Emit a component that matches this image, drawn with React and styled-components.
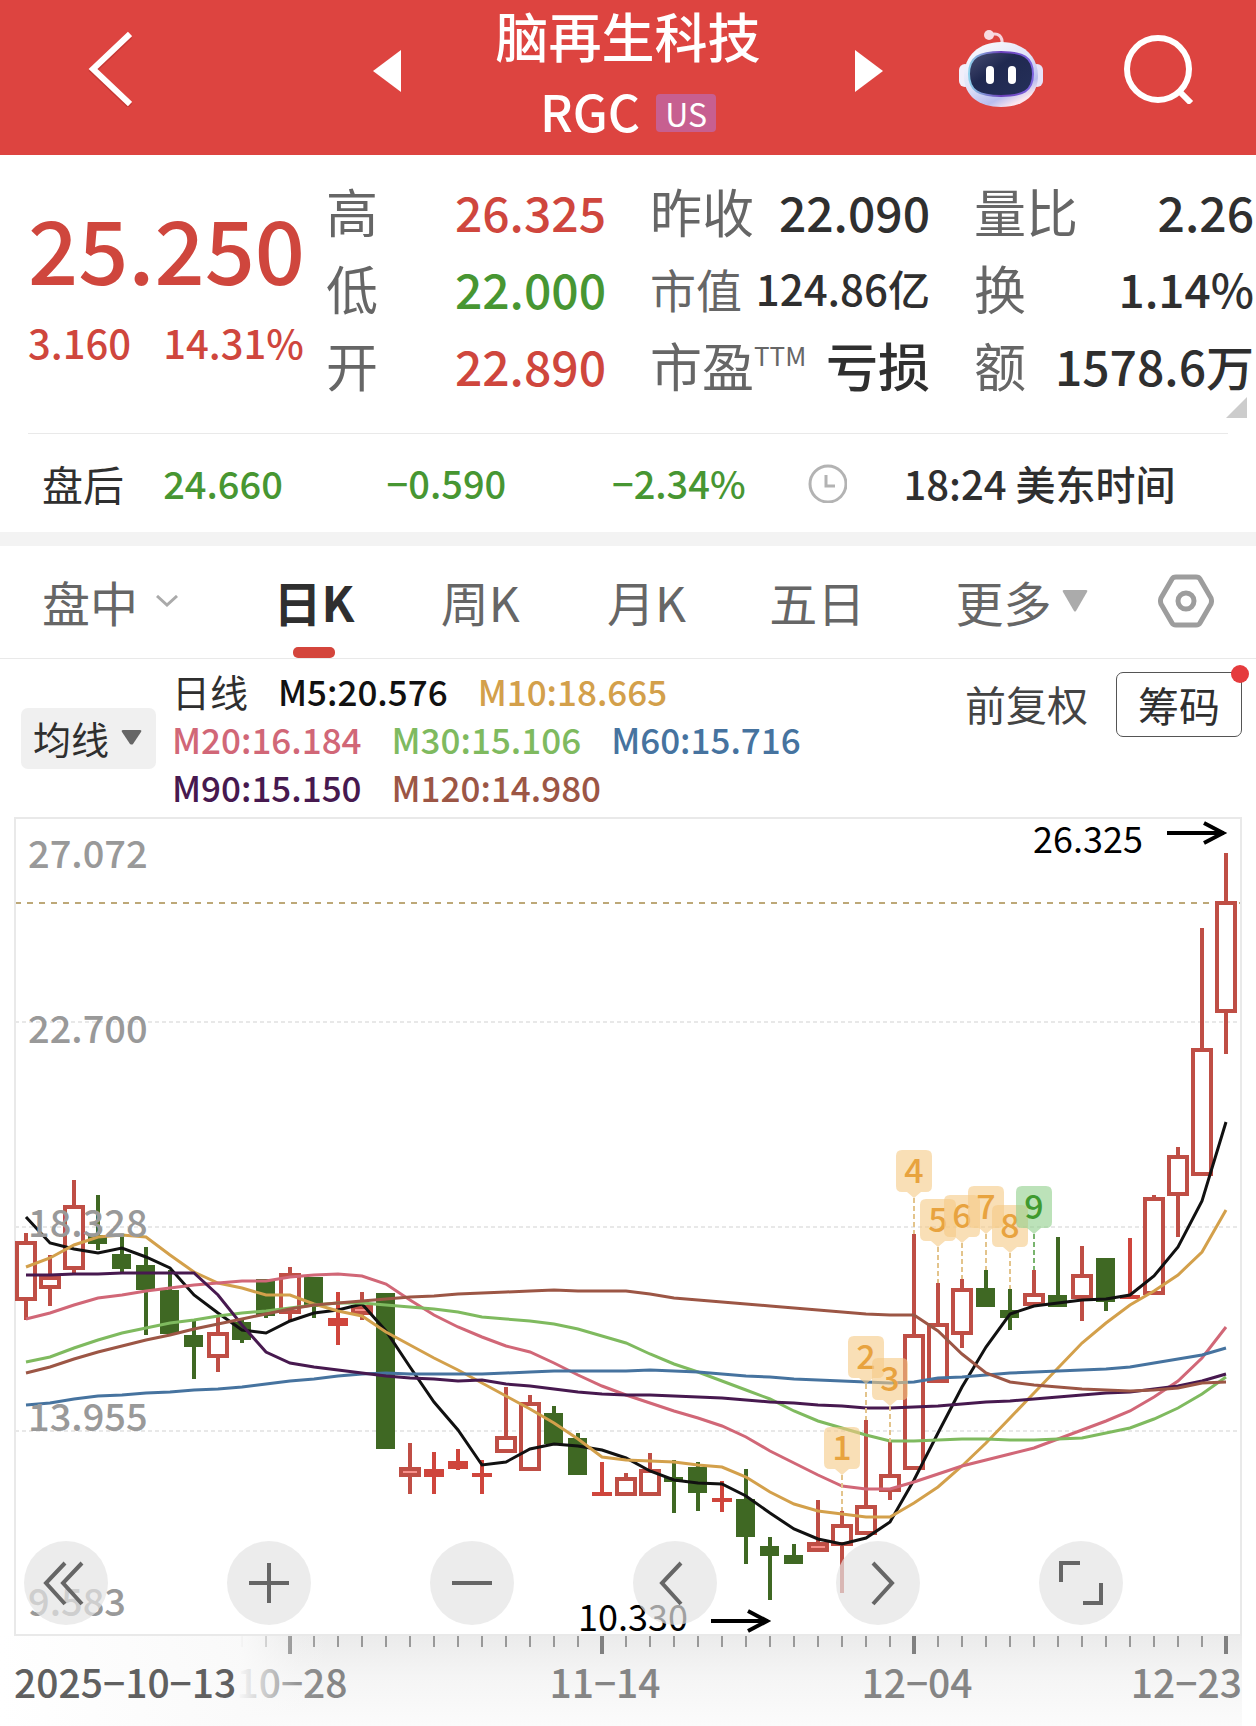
import React from "react";
import styled, { createGlobalStyle } from "styled-components";

const RED = "#cf463d";
const GREEN = "#479632";
const INK = "#2f2f2f";
const GREY = "#666666";
const RULE = "#e9e9e9";

const GlobalStyle = createGlobalStyle`
  *, *::before, *::after { box-sizing: border-box; }
  body {
    margin: 0;
    background: #fff;
    color: ${INK};
    font-family: "Noto Sans CJK SC", "Noto Sans", sans-serif;
  }
  button, select { font: inherit; color: inherit; }
  h1, p, dl, dd, dt { margin: 0; }
`;

const PlainButton = styled.button`
  display: flex;
  align-items: center;
  padding: 0;
  border: 0;
  background: none;
  cursor: pointer;
`;

/* ---------- header ---------- */

const Header = styled.header`
  display: grid;
  grid-template-columns: 1fr 510px 1fr;
  align-items: center;
  height: 155px;
  background: #dd4440;
  color: #fff;
`;

const HeaderStart = styled.div`
  display: flex;
  padding: 0 0 18px 88px;
`;

const HeaderCenter = styled.div`
  display: flex;
  align-items: center;
  justify-content: space-between;
  height: 100%;
`;

const HeaderEnd = styled.div`
  display: flex;
  align-items: center;
  justify-content: flex-end;
  gap: 80px;
  padding: 0 62px 18px 0;
`;

const Stepper = styled(PlainButton)`
  padding-bottom: 14px;
`;

const TitleBlock = styled.div`
  display: flex;
  flex-direction: column;
  align-items: center;
  padding-bottom: 5px;
`;

const StockName = styled.h1`
  font-size: 53px;
  font-weight: 500;
  line-height: 70px;
`;

const TickerLine = styled.p`
  display: flex;
  align-items: center;
  gap: 16px;
  font-size: 50px;
  font-weight: 500;
  line-height: 80px;
`;

const MarketBadge = styled.span`
  width: 60px;
  margin-top: 6px;
  border-radius: 4px;
  background: #c75f90;
  font-size: 32px;
  font-weight: 400;
  line-height: 38px;
  text-align: center;
`;

/* ---------- quote ---------- */

const Quote = styled.section`
  position: relative;
  display: flex;
  height: 278px;
  padding: 18px 2px 0 28px;
`;

const PriceBlock = styled.div`
  flex: 0 0 298px;
  color: ${RED};
`;

const Price = styled.p`
  padding-top: 10px;
  font-size: 88px;
  font-weight: 500;
  line-height: 128px;
`;

const Change = styled.p`
  display: flex;
  gap: 32px;
  padding-top: 2px;
  font-size: 40px;
  font-weight: 500;
  line-height: 58px;
`;

const Stats = styled.dl`
  display: grid;
  flex: 1;
  grid-template-columns: repeat(3, 1fr);
  grid-auto-rows: 77px;
  column-gap: 44px;
`;

const Stat = styled.div`
  display: flex;
  align-items: center;
  justify-content: space-between;
  padding-bottom: 2px;
  white-space: nowrap;
`;

const StatLabel = styled.dt`
  display: flex;
  color: ${GREY};
  font-size: ${(p) => (p.$compact ? 46 : 52)}px;
  line-height: 76px;
`;

const Sup = styled.sup`
  font-size: 26px;
  line-height: 56px;
  vertical-align: top;
`;

const StatValue = styled.dd`
  color: ${(p) => p.$color || INK};
  font-size: ${(p) => p.$size || 48}px;
  font-weight: 500;
  line-height: 76px;
`;

const Corner = styled.span`
  position: absolute;
  right: 9px;
  bottom: 15px;
  border-style: solid;
  border-width: 0 0 21px 21px;
  border-color: transparent transparent #cccccc transparent;
`;

/* ---------- after hours ---------- */

const AfterHours = styled.section`
  display: grid;
  grid-template-columns: 121fr 223fr 225fr 196fr 95fr 310fr;
  align-items: center;
  height: 99px;
  margin: 0 28px;
  padding: 0 14px;
  border-top: 1px solid ${RULE};
  white-space: nowrap;
`;

const Cell = styled.span`
  display: flex;
  align-items: center;
  font-size: ${(p) => p.$size || 38}px;
  font-weight: ${(p) => (p.$light ? 400 : 500)};
  line-height: 60px;
  color: ${(p) => p.$color || INK};
`;

const Band = styled.div`
  height: 14px;
  background: #f3f3f3;
`;

/* ---------- tabs ---------- */

const Tabs = styled.nav`
  display: grid;
  grid-template-columns: 231fr 167fr 166fr 162fr 186fr 202fr 56fr;
  align-items: stretch;
  height: 113px;
  padding: 0 42px;
  border-bottom: 1px solid ${RULE};
`;

const TabCell = styled.div`
  display: flex;
`;

const Tab = styled(PlainButton)`
  position: relative;
  gap: ${(p) => p.$gap || 0}px;
  padding-bottom: 2px;
  color: ${(p) => (p.$active ? INK : GREY)};
  font-size: 48px;
  font-weight: ${(p) => (p.$active ? 700 : 400)};
  line-height: 72px;
  white-space: nowrap;

  &::after {
    content: "";
    display: ${(p) => (p.$active ? "block" : "none")};
    position: absolute;
    left: calc(50% - 21px);
    bottom: 0;
    width: 42px;
    height: 11px;
    border-radius: 5px;
    background: #d4453c;
  }
`;

/* ---------- indicators ---------- */

const Indicators = styled.section`
  display: flex;
  align-items: center;
  height: 158px;
  padding: 0 14px 0 21px;
`;

const SelectBox = styled.label`
  position: relative;
  flex: none;
  width: 135px;
  height: 61px;
`;

const Select = styled.select`
  appearance: none;
  width: 100%;
  height: 100%;
  padding: 0 0 0 12px;
  border: 0;
  border-radius: 7px;
  background: #f0f0f0;
  font-size: 38px;
  line-height: 60px;
`;

const SelectArrow = styled.svg`
  position: absolute;
  right: 14px;
  top: 22px;
  pointer-events: none;
`;

const Averages = styled.div`
  flex: 1;
  padding: 2px 0 0 16px;
`;

const AverageRow = styled.div`
  display: flex;
  gap: 30px;
  font-size: 35px;
  font-weight: 500;
  line-height: 48px;
  white-space: nowrap;
`;

const Average = styled.span`
  color: ${(p) => p.$color};
`;

const PeriodName = styled.span`
  font-size: 38px;
  font-weight: 400;
`;

const Tools = styled.div`
  display: flex;
  align-self: flex-start;
  align-items: center;
  gap: 28px;
  padding-top: 12px;
`;

const TextTool = styled(PlainButton)`
  padding-bottom: 2px;
  color: #444444;
  font-size: 41px;
  line-height: 64px;
`;

const BoxTool = styled(PlainButton)`
  position: relative;
  justify-content: center;
  width: 126px;
  height: 65px;
  border: 1px solid #555555;
  border-radius: 7px;
  font-size: 41px;
  line-height: 60px;

  &::after {
    content: "";
    position: absolute;
    top: -8px;
    right: -8px;
    width: 18px;
    height: 18px;
    border-radius: 50%;
    background: #e53b3d;
  }
`;

/* ---------- chart ---------- */

const ChartArea = styled.section`
  position: relative;
`;

const ChartSvg = styled.svg`
  display: block;
  width: 100%;
  height: auto;
  overflow: visible;
  font-family: "Noto Sans CJK SC", "Noto Sans", sans-serif;
`;

const ChartControls = styled.div`
  position: absolute;
  left: 24px;
  right: 133px;
  bottom: 101px;
  display: flex;
  justify-content: space-between;
`;

const RoundButton = styled(PlainButton)`
  justify-content: center;
  width: 84px;
  height: 84px;
  border-radius: 50%;
  background: rgba(228, 228, 228, 0.7);
`;

const X0 = 26;
const STEP = 24;
const xAt = (i) => X0 + i * STEP;

/* kind: h = hollow rise, f = filled rise, g = fall; then high, top, bottom, low */
const CANDLES = [
  ["h", 1233, 1241, 1301, 1320], ["h", 1255, 1276, 1289, 1306], ["h", 1180, 1205, 1270, 1274],
  ["g", 1195, 1235, 1244, 1250], ["g", 1235, 1254, 1269, 1273], ["g", 1247, 1265, 1290, 1335],
  ["g", 1270, 1290, 1334, 1334], ["g", 1321, 1335, 1347, 1379], ["h", 1317, 1332, 1358, 1372],
  ["g", 1320, 1322, 1340, 1343], ["g", 1279, 1279, 1316, 1318], ["h", 1267, 1273, 1314, 1321],
  ["g", 1277, 1277, 1307, 1318], ["f", 1292, 1318, 1326, 1345], ["h", 1292, 1305, 1315, 1320],
  ["g", 1293, 1293, 1449, 1449], ["h", 1443, 1467, 1477, 1494], ["f", 1452, 1469, 1477, 1494],
  ["f", 1449, 1461, 1469, 1470], ["f", 1460, 1473, 1477, 1494], ["h", 1387, 1436, 1453, 1453],
  ["h", 1395, 1402, 1471, 1471], ["g", 1406, 1413, 1444, 1444], ["g", 1433, 1438, 1475, 1475],
  ["f", 1462, 1492, 1496, 1496], ["h", 1473, 1477, 1496, 1496], ["h", 1453, 1469, 1496, 1496],
  ["g", 1460, 1477, 1482, 1513], ["g", 1462, 1467, 1493, 1511], ["f", 1481, 1498, 1502, 1512],
  ["g", 1469, 1499, 1537, 1564], ["g", 1537, 1546, 1556, 1600], ["g", 1544, 1555, 1564, 1564],
  ["h", 1500, 1542, 1552, 1552], ["h", 1511, 1524, 1546, 1593], ["h", 1420, 1505, 1535, 1535],
  ["h", 1442, 1474, 1492, 1500], ["h", 1234, 1334, 1470, 1470], ["h", 1283, 1323, 1383, 1383],
  ["h", 1279, 1288, 1335, 1348], ["g", 1270, 1288, 1307, 1307], ["g", 1289, 1310, 1318, 1330],
  ["h", 1270, 1293, 1306, 1306], ["g", 1237, 1295, 1307, 1307], ["h", 1246, 1274, 1299, 1321],
  ["g", 1258, 1258, 1302, 1311], ["f", 1238, 1295, 1299, 1299], ["h", 1195, 1197, 1295, 1295],
  ["h", 1147, 1155, 1196, 1237], ["h", 928, 1048, 1176, 1176], ["h", 853, 901, 1013, 1054],
];

const LINES = [
  { color: "#111111", ys: [1217, 1243, 1249, 1253, 1248, 1257, 1268, 1295, 1313, 1330, 1333, 1321, 1313, 1310, 1304, 1331, 1367, 1402, 1430, 1465, 1462, 1449, 1444, 1446, 1450, 1458, 1471, 1480, 1483, 1484, 1496, 1513, 1529, 1539, 1544, 1538, 1522, 1480, 1433, 1387, 1347, 1314, 1306, 1303, 1300, 1299, 1295, 1276, 1247, 1201, 1122] },
  { color: "#d3a04b", ys: [1267, 1258, 1245, 1237, 1235, 1237, 1255, 1272, 1283, 1288, 1295, 1295, 1304, 1311, 1316, 1332, 1345, 1358, 1370, 1383, 1396, 1409, 1423, 1439, 1457, 1460, 1461, 1462, 1465, 1467, 1477, 1492, 1504, 1511, 1514, 1517, 1517, 1503, 1487, 1466, 1443, 1418, 1393, 1368, 1343, 1323, 1305, 1291, 1275, 1252, 1210] },
  { color: "#d16777", ys: [1319, 1313, 1305, 1298, 1295, 1291, 1288, 1285, 1283, 1281, 1281, 1277, 1275, 1274, 1276, 1284, 1300, 1315, 1327, 1337, 1346, 1352, 1363, 1375, 1386, 1395, 1403, 1411, 1418, 1426, 1437, 1451, 1463, 1475, 1486, 1489, 1489, 1482, 1474, 1466, 1460, 1454, 1448, 1439, 1430, 1421, 1411, 1397, 1381, 1358, 1327] },
  { color: "#7fba5f", ys: [1362, 1357, 1348, 1340, 1333, 1328, 1323, 1320, 1316, 1313, 1311, 1308, 1305, 1303, 1303, 1305, 1307, 1309, 1312, 1317, 1319, 1321, 1324, 1329, 1336, 1343, 1354, 1364, 1372, 1381, 1390, 1399, 1411, 1421, 1428, 1435, 1441, 1441, 1440, 1439, 1439, 1440, 1440, 1439, 1438, 1433, 1428, 1419, 1408, 1394, 1377] },
  { color: "#46739f", ys: [1405, 1403, 1399, 1396, 1395, 1393, 1392, 1390, 1389, 1387, 1384, 1381, 1379, 1376, 1374, 1373, 1374, 1374, 1374, 1374, 1373, 1372, 1371, 1371, 1371, 1371, 1370, 1371, 1372, 1374, 1376, 1377, 1379, 1380, 1381, 1382, 1383, 1382, 1378, 1377, 1375, 1373, 1372, 1371, 1370, 1369, 1367, 1363, 1359, 1355, 1348] },
  { color: "#47194f", ys: [1275, 1275, 1274, 1274, 1273, 1273, 1273, 1273, 1295, 1325, 1352, 1363, 1367, 1370, 1373, 1376, 1378, 1379, 1381, 1380, 1384, 1386, 1389, 1392, 1394, 1395, 1395, 1396, 1397, 1398, 1400, 1402, 1403, 1405, 1406, 1408, 1408, 1407, 1406, 1404, 1402, 1401, 1399, 1397, 1395, 1393, 1392, 1389, 1386, 1381, 1374] },
  { color: "#9c5645", ys: [1373, 1367, 1359, 1352, 1346, 1340, 1335, 1329, 1324, 1319, 1314, 1309, 1305, 1303, 1301, 1299, 1297, 1296, 1294, 1293, 1292, 1291, 1290, 1291, 1291, 1291, 1294, 1298, 1300, 1302, 1304, 1306, 1308, 1310, 1312, 1314, 1315, 1315, 1331, 1354, 1373, 1382, 1385, 1387, 1389, 1390, 1391, 1390, 1388, 1383, 1382] },
];

/* label, candle index, top of the tag */
const MARKS = [
  [1, 34, 1427], [2, 35, 1336], [3, 36, 1358], [4, 37, 1150], [5, 38, 1199],
  [6, 39, 1195], [7, 40, 1186], [8, 41, 1205], [9, 42, 1186],
];

const PRICE_LABELS = [
  ["27.072", 868], ["22.700", 1043], ["18.328", 1237], ["13.955", 1431], ["9.583", 1616],
];

const DATE_LABELS = [
  ["10−28", 292, "middle"], ["11−14", 605, "middle"], ["12−04", 917, "middle"], ["12−23", 1242, "end"],
];

function Candle({ data, i }) {
  const [kind, high, top, bottom, low] = data;
  const x = xAt(i);
  const color = kind === "g" ? "#3f6823" : kind === "f" ? "#cf453c" : "#bf4e45";
  return (
    <g>
      {high < top && <line x1={x} x2={x} y1={high} y2={top + 1} stroke={color} strokeWidth="4" />}
      {low > bottom && <line x1={x} x2={x} y1={bottom - 1} y2={low} stroke={color} strokeWidth="4" />}
      {kind === "h" ? (
        <rect x={x - 9} y={top + 2} width="18" height={bottom - top - 4} fill={bottom - top > 10 ? "#ffffff" : "#f7908a"} stroke={color} strokeWidth="4" />
      ) : (
        <rect x={x - 10} y={top} width={kind === "f" ? 20 : 19} height={bottom - top} fill={color} />
      )}
    </g>
  );
}

function Mark({ n, i, top }) {
  const x = xAt(i);
  const last = n === 9;
  const tag = `M${x - 12} ${top}h24q6 0 6 6v30q0 6-6 6h-5l-7 6l-7-6h-5q-6 0-6-6v-30q0-6 6-6z`;
  return (
    <g>
      <line x1={x} x2={x} y1={top + 48} y2={CANDLES[i][1]} stroke={last ? "#79b46e" : "#e3c48c"} strokeWidth="2" strokeDasharray="5 3" />
      <path d={tag} fill={last ? "#8fcf8a" : "#f5ca85"} fillOpacity="0.6" />
      <text x={x} y={top + 33} fill={last ? "#3f9a2f" : "#e8a33f"} fontSize="34" fontWeight="500" textAnchor="middle">{n}</text>
    </g>
  );
}

function Arrow({ x, y }) {
  return (
    <path d={`M${x - 59} ${y}H${x - 2}M${x - 22} ${y - 10}L${x - 3} ${y}L${x - 22} ${y + 10}`} fill="none" stroke="#000" strokeWidth="4" />
  );
}

function Chart() {
  return (
    <ChartSvg viewBox="0 817 1256 909" role="img" aria-label="日K线图">
      <defs>
        <linearGradient id="axis" x1="0" y1="0" x2="0" y2="1">
          <stop offset="0" stopColor="#ebebeb" />
          <stop offset="0.45" stopColor="#f5f5f5" />
          <stop offset="1" stopColor="#fbfbfb" />
        </linearGradient>
        <linearGradient id="fade" gradientUnits="userSpaceOnUse" x1="0" y1="0" x2="330" y2="0">
          <stop offset="0" stopColor="#fff" />
          <stop offset="0.73" stopColor="#fafafa" stopOpacity="0.95" />
          <stop offset="0.9" stopColor="#fafafa" stopOpacity="0.15" />
          <stop offset="1" stopColor="#fafafa" stopOpacity="0" />
        </linearGradient>
      </defs>

      {[1022, 1227, 1431].map((y) => (
        <line key={y} x1="15" x2="1241" y1={y} y2={y} stroke="#dedede" strokeWidth="2" strokeOpacity="0.7" strokeDasharray="4 3" />
      ))}
      <line x1="15" x2="1241" y1="903" y2="903" stroke="#bda878" strokeWidth="2" strokeDasharray="6 6" />
      <rect x="15" y="818" width="1226" height="817" fill="none" stroke={RULE} strokeWidth="2" />

      {CANDLES.map((c, i) => <Candle key={i} data={c} i={i} />)}
      {LINES.map((l) => (
        <polyline key={l.color} points={l.ys.map((y, i) => `${xAt(i)},${y}`).join(" ")} fill="none" stroke={l.color} strokeWidth="3" />
      ))}
      {MARKS.map(([n, i, top]) => <Mark key={n} n={n} i={i} top={top} />)}

      {PRICE_LABELS.map(([t, y]) => (
        <text key={t} x="28" y={y} fill="#999999" fontSize="38" fontWeight="500">{t}</text>
      ))}
      <text x="1143" y="853" textAnchor="end" fontSize="36" fill="#000">26.325</text>
      <Arrow x={1226} y={833} />
      <text x="578" y="1631" fontSize="36" fill="#000">10.330</text>
      <Arrow x={770} y={1621} />

      <rect x="0" y="1636" width="1242" height="90" fill="url(#axis)" />
      {Array.from({ length: 42 }, (_, k) => {
        const x = xAt(k + 9);
        const major = (k + 9 - 11) % 13 === 0;
        return <rect key={k} x={x - (major ? 2 : 1)} y="1636" width={major ? 4 : 2} height={major ? 18 : 11} fill={major ? "#808080" : "#999999"} />;
      })}
      {DATE_LABELS.map(([t, x, anchor]) => (
        <text key={t} x={x} y="1698" textAnchor={anchor} fontSize="39" fontWeight="500" fill="#858585">{t}</text>
      ))}
      <rect x="0" y="1636" width="330" height="90" fill="url(#fade)" />
      <text x="14" y="1698" fontSize="39" fontWeight="500" fill="#606060">2025−10−13</text>
    </ChartSvg>
  );
}

function Robot() {
  return (
    <svg width="86" height="80" viewBox="0 0 86 80" aria-hidden="true">
      <defs>
        <linearGradient id="shell" x1="0" y1="0" x2="0.6" y2="1">
          <stop offset="0" stopColor="#ffffff" />
          <stop offset="0.55" stopColor="#dfe2f8" />
          <stop offset="0.85" stopColor="#b9bdee" />
          <stop offset="1" stopColor="#fbe6ee" />
        </linearGradient>
        <linearGradient id="visor" x1="0" y1="0" x2="1" y2="1">
          <stop offset="0" stopColor="#4a4f74" />
          <stop offset="0.4" stopColor="#202950" />
          <stop offset="1" stopColor="#25305a" />
        </linearGradient>
        <linearGradient id="glow" x1="0" y1="0" x2="1" y2="0">
          <stop offset="0" stopColor="#8fd0ea" />
          <stop offset="0.5" stopColor="#6a3fb8" />
          <stop offset="1" stopColor="#7d63e0" />
        </linearGradient>
      </defs>
      <path d="M32 6C40 3 45 7 44 16" fill="none" stroke="#f6d3dc" strokeWidth="3" />
      <circle cx="31" cy="6" r="5" fill="#f8dbe3" />
      <rect x="1" y="35" width="12" height="23" rx="6" fill="#f1eefa" />
      <rect x="73" y="35" width="12" height="23" rx="6" fill="#e6e2f8" />
      <path d="M43 13C65 13 80 27 80 47C80 67 65 78 43 78C21 78 6 67 6 47C6 27 21 13 43 13Z" fill="url(#shell)" />
      <path d="M43 23C65 23 75 28 75 45C75 62 65 67 43 67C21 67 11 62 11 45C11 28 21 23 43 23Z" fill="url(#visor)" stroke="url(#glow)" strokeWidth="2" />
      <rect x="28" y="37" width="8" height="18" rx="4" fill="#fff" />
      <rect x="50" y="37" width="8" height="18" rx="4" fill="#fff" />
    </svg>
  );
}

const CONTROLS = [
  ["快退", "M21 2L2 22L21 43M38 2L19 22L38 43", 44],
  ["放大", "M0 22H40M20 2V42", 40],
  ["缩小", "M0 22H40", 40],
  ["左移", "M21 2L2 22L21 43", 30],
  ["右移", "M9 2L28 22L9 43", 28],
  ["全屏", "M2 21V2H21M24 42H42V22", 44],
];

const STATS = [
  { label: "高", value: "26.325", color: RED },
  { label: "昨收", value: "22.090" },
  { label: "量比", value: "2.26" },
  { label: "低", value: "22.000", color: GREEN },
  { label: "市值", value: "124.86亿", compact: true, size: 42 },
  { label: "换", value: "1.14%", size: 46 },
  { label: "开", value: "22.890", color: RED },
  { label: "市盈", sup: "TTM", value: "亏损", size: 52 },
  { label: "额", value: "1578.6万" },
];

const AVERAGES = [
  [["M5:20.576", "#111111"], ["M10:18.665", "#d3a04b"]],
  [["M20:16.184", "#d16777"], ["M30:15.106", "#7fba5f"], ["M60:15.716", "#46739f"]],
  [["M90:15.150", "#47194f"], ["M120:14.980", "#9c5645"]],
];

export default function App() {
  return (
    <>
      <GlobalStyle />
      <Header>
        <HeaderStart>
          <PlainButton aria-label="返回">
            <svg width="44" height="76" viewBox="0 0 44 76" fill="none">
              <path d="M42 5L5 40L42 75" stroke="#b5302d" strokeOpacity="0.6" strokeWidth="6" />
              <path d="M42 3L5 38L42 73" stroke="#fff" strokeWidth="6" />
            </svg>
          </PlainButton>
        </HeaderStart>
        <HeaderCenter>
          <Stepper aria-label="上一只">
            <svg width="28" height="42" viewBox="0 0 28 42"><path d="M28 0V42L0 21Z" fill="#fff" /></svg>
          </Stepper>
          <TitleBlock>
            <StockName>脑再生科技</StockName>
            <TickerLine>RGC<MarketBadge>US</MarketBadge></TickerLine>
          </TitleBlock>
          <Stepper aria-label="下一只">
            <svg width="28" height="42" viewBox="0 0 28 42"><path d="M0 0V42L28 21Z" fill="#fff" /></svg>
          </Stepper>
        </HeaderCenter>
        <HeaderEnd>
          <PlainButton aria-label="智能助手"><Robot /></PlainButton>
          <PlainButton aria-label="搜索">
            <svg width="70" height="70" viewBox="0 0 70 70" fill="none" stroke="#fff">
              <circle cx="34" cy="35" r="31" strokeWidth="6" />
              <path d="M55 57L67 69" strokeWidth="6" />
            </svg>
          </PlainButton>
        </HeaderEnd>
      </Header>

      <Quote>
        <PriceBlock>
          <Price>25.250</Price>
          <Change><span>3.160</span><span>14.31%</span></Change>
        </PriceBlock>
        <Stats>
          {STATS.map((s) => (
            <Stat key={s.label}>
              <StatLabel $compact={s.compact}>{s.label}{s.sup && <Sup>{s.sup}</Sup>}</StatLabel>
              <StatValue $color={s.color} $size={s.size}>{s.value}</StatValue>
            </Stat>
          ))}
        </Stats>
        <Corner />
      </Quote>

      <AfterHours>
        <Cell $size={41} $light>盘后</Cell>
        <Cell $color={GREEN}>24.660</Cell>
        <Cell $color={GREEN}>−0.590</Cell>
        <Cell $color={GREEN}>−2.34%</Cell>
        <Cell>
          <svg width="39" height="39" viewBox="0 0 39 39" fill="none" stroke="#b3b3b3" strokeWidth="3" aria-hidden="true">
            <circle cx="20" cy="20" r="18" />
            <path d="M18 11V22H27" />
          </svg>
        </Cell>
        <Cell $size={40}>18:24 美东时间</Cell>
      </AfterHours>
      <Band />

      <Tabs>
        <TabCell>
          <Tab $gap={18}>盘中
            <svg width="22" height="12" viewBox="0 0 22 12" fill="none"><path d="M1 1L11 10L21 1" stroke="#aaa" strokeWidth="3" /></svg>
          </Tab>
        </TabCell>
        <TabCell><Tab $active aria-current="page">日K</Tab></TabCell>
        <TabCell><Tab>周K</Tab></TabCell>
        <TabCell><Tab>月K</Tab></TabCell>
        <TabCell><Tab>五日</Tab></TabCell>
        <TabCell>
          <Tab $gap={10}>更多
            <svg width="26" height="22" viewBox="0 0 26 22"><path d="M2 0H24Q26 0 25 2L14 21Q13 22 12 21L1 2Q0 0 2 0Z" fill="#ababab" /></svg>
          </Tab>
        </TabCell>
        <TabCell>
          <Tab aria-label="图表设置">
            <svg width="56" height="54" viewBox="0 0 56 54" fill="none" stroke="#9d9d9d">
              <path d="M18 3H38Q41 3 42 5L53 24Q54 27 53 30L42 49Q41 51 38 51H18Q15 51 14 49L3 30Q2 27 3 24L14 5Q15 3 18 3Z" strokeWidth="5" />
              <circle cx="28" cy="27" r="8" strokeWidth="5" />
            </svg>
          </Tab>
        </TabCell>
      </Tabs>

      <Indicators>
        <SelectBox>
          <Select aria-label="指标" defaultValue="ma">
            <option value="ma">均线</option>
          </Select>
          <SelectArrow width="21" height="15" viewBox="0 0 21 15"><path d="M2 0H19Q21 0 20 2L12 14Q11 15 9 14L1 2Q0 0 2 0Z" fill="#666" /></SelectArrow>
        </SelectBox>
        <Averages>
          {AVERAGES.map((row, r) => (
            <AverageRow key={r}>
              {r === 0 && <PeriodName>日线</PeriodName>}
              {row.map(([t, c]) => <Average key={t} $color={c}>{t}</Average>)}
            </AverageRow>
          ))}
        </Averages>
        <Tools>
          <TextTool>前复权</TextTool>
          <BoxTool>筹码</BoxTool>
        </Tools>
      </Indicators>

      <ChartArea>
        <Chart />
        <ChartControls>
          {CONTROLS.map(([name, d, w]) => (
            <RoundButton key={name} aria-label={name}>
              <svg width={w} height="44" viewBox={`0 0 ${w} 44`} fill="none" stroke="#666" strokeWidth="4" overflow="visible"><path d={d} /></svg>
            </RoundButton>
          ))}
        </ChartControls>
      </ChartArea>
    </>
  );
}
